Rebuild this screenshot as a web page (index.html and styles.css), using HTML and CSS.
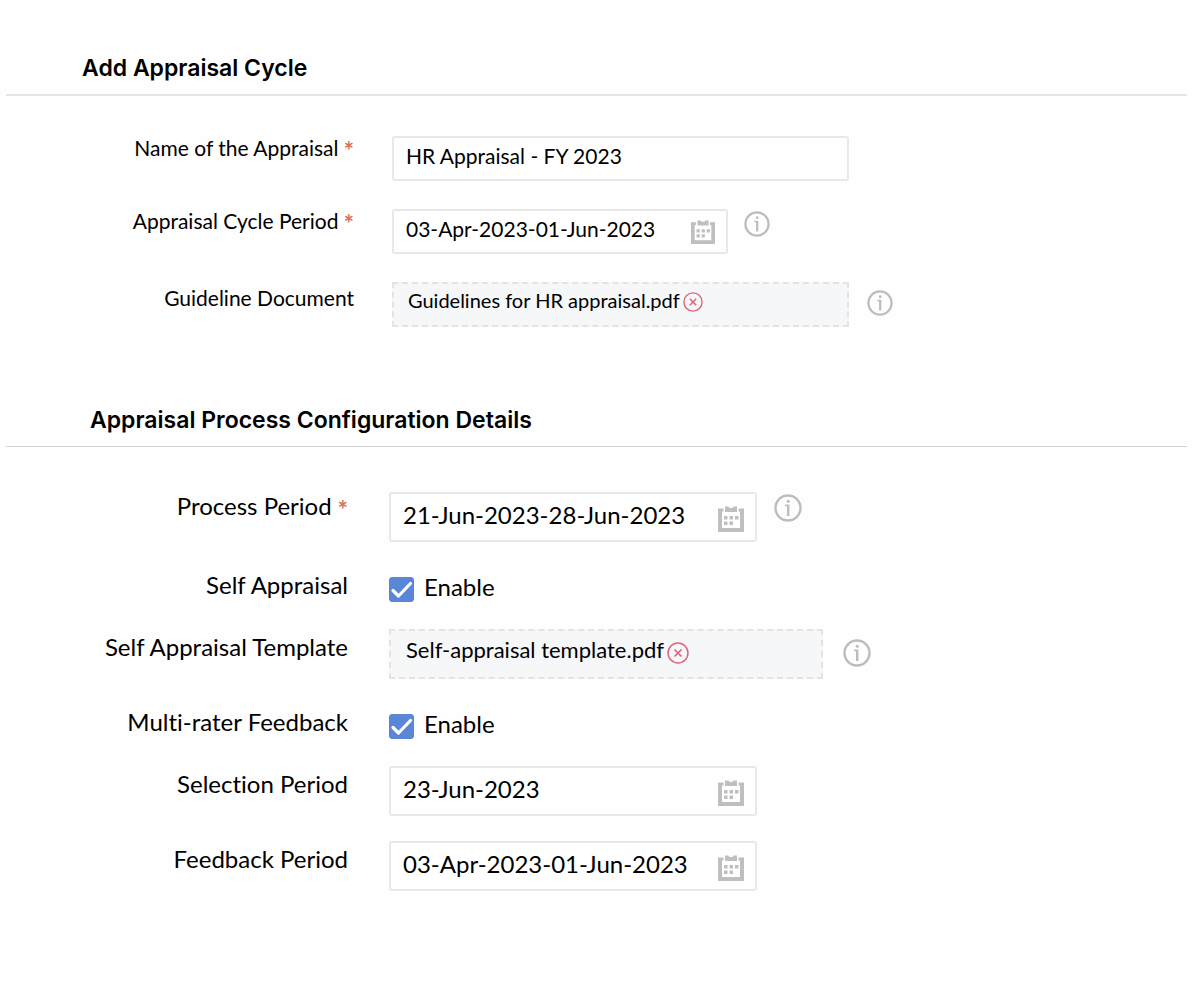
FILE: index.html
```html
<!DOCTYPE html>
<html lang="en">
<head>
  <meta charset="UTF-8">
  <meta name="viewport" content="width=device-width, initial-scale=1">
  <title>Add Appraisal Cycle</title>
  <link rel="stylesheet" href="styles.css">
</head>
<body>
  <!-- shared icons -->
  <svg class="icon-defs" width="0" height="0" aria-hidden="true">
    <symbol id="icon-calendar" viewBox="0 0 26 26">
      <path d="M0 2.500h5.500v3H4v16.500h18V5.500h-1.500v-3H26V26H0z"/>
      <path d="M7 .5h3.500l1 1.500h3l1-1.500H19V6H7z"/>
      <path d="M6 10h3.500v3.500H6zM11.500 10H15v3.500h-3.500zM17 10h3.500v3.500H17zM6 15.500h3.500V19H6zM11.500 15.500H15V19h-3.500z"/>
    </symbol>
    <symbol id="icon-info" viewBox="0 0 28 28">
      <circle cx="14" cy="14" r="12.500" fill="none" stroke="currentColor" stroke-width="2.400"/>
      <circle cx="14.200" cy="7.200" r="1.500"/>
      <path d="M11 10.500h4.400V22H13v-9.800h-2z"/>
    </symbol>
    <symbol id="icon-remove" viewBox="0 0 22 22">
      <circle cx="11" cy="11" r="10" fill="none" stroke="currentColor" stroke-width="1.500"/>
      <path d="M7.500 7.500l7 7M14.500 7.500l-7 7" fill="none" stroke="currentColor" stroke-width="1.700"/>
    </symbol>
    <symbol id="icon-check" viewBox="0 0 25 25">
      <path d="M4 13.500l5.500 5.500L21.500 6.500" fill="none" stroke="currentColor" stroke-width="3.200" stroke-linecap="round" stroke-linejoin="round"/>
    </symbol>
  </svg>

  <form class="appraisal-form">
    <section class="section cycle">
      <h2 class="section-title">Add Appraisal Cycle</h2>
      <div class="fields">
        <div class="row">
          <label class="label" for="name">Name of the Appraisal <span class="required">*</span></label>
          <div class="control wide">
            <input class="input" type="text" id="name" value="HR Appraisal - FY 2023" required>
          </div>
        </div>
        <div class="row">
          <label class="label" for="cyclePeriod">Appraisal Cycle Period <span class="required">*</span></label>
          <div class="control">
            <input class="input" type="text" id="cyclePeriod" value="03-Apr-2023-01-Jun-2023" required>
            <button class="calendar-btn" type="button" aria-label="Choose dates"><svg><use href="#icon-calendar"/></svg></button>
          </div>
          <button class="info-btn" type="button" aria-label="Help"><svg><use href="#icon-info"/></svg></button>
        </div>
        <div class="row file-row">
          <span class="label">Guideline Document</span>
          <div class="control wide file-box">
            <span class="file-name">Guidelines for HR appraisal.pdf</span>
            <button class="remove-btn" type="button" aria-label="Remove file"><svg><use href="#icon-remove"/></svg></button>
          </div>
          <button class="info-btn" type="button" aria-label="Help"><svg><use href="#icon-info"/></svg></button>
        </div>
      </div>
    </section>

    <section class="section process">
      <h2 class="section-title">Appraisal Process Configuration Details</h2>
      <div class="fields">
        <div class="row">
          <label class="label" for="processPeriod">Process Period <span class="required">*</span></label>
          <div class="control">
            <input class="input" type="text" id="processPeriod" value="21-Jun-2023-28-Jun-2023" required>
            <button class="calendar-btn" type="button" aria-label="Choose dates"><svg><use href="#icon-calendar"/></svg></button>
          </div>
          <button class="info-btn" type="button" aria-label="Help"><svg><use href="#icon-info"/></svg></button>
        </div>
        <div class="row low">
          <span class="label">Self Appraisal</span>
          <label class="check">
            <span class="check-box">
              <input type="checkbox" checked>
              <svg><use href="#icon-check"/></svg>
            </span>
            Enable
          </label>
        </div>
        <div class="row low file-row">
          <span class="label">Self Appraisal Template</span>
          <div class="control wide file-box">
            <span class="file-name">Self-appraisal template.pdf</span>
            <button class="remove-btn" type="button" aria-label="Remove file"><svg><use href="#icon-remove"/></svg></button>
          </div>
          <button class="info-btn" type="button" aria-label="Help"><svg><use href="#icon-info"/></svg></button>
        </div>
        <div class="row low">
          <span class="label">Multi-rater Feedback</span>
          <label class="check">
            <span class="check-box">
              <input type="checkbox" checked>
              <svg><use href="#icon-check"/></svg>
            </span>
            Enable
          </label>
        </div>
        <div class="row low">
          <label class="label" for="selectionPeriod">Selection Period</label>
          <div class="control">
            <input class="input" type="text" id="selectionPeriod" value="23-Jun-2023">
            <button class="calendar-btn" type="button" aria-label="Choose dates"><svg><use href="#icon-calendar"/></svg></button>
          </div>
        </div>
        <div class="row low">
          <label class="label" for="feedbackPeriod">Feedback Period</label>
          <div class="control">
            <input class="input" type="text" id="feedbackPeriod" value="03-Apr-2023-01-Jun-2023">
            <button class="calendar-btn" type="button" aria-label="Choose dates"><svg><use href="#icon-calendar"/></svg></button>
          </div>
        </div>
      </div>
    </section>
  </form>
</body>
</html>
```

FILE: styles.css
```css
* {
  box-sizing: border-box;
}

body {
  margin: 0;
  background: #fefefe;
  color: #000;
  font-family: Lato, sans-serif;
  font-variant-ligatures: none;
}

button {
  padding: 0;
  border: none;
  background: none;
  cursor: pointer;
}

svg {
  display: block;
  width: 100%;
  height: 100%;
  fill: currentColor;
}

.icon-defs {
  position: absolute;
  width: 0;
  height: 0;
}

.appraisal-form {
  padding: 53px 7px 40px 6px;
}

.section-title {
  margin: 0;
  padding: 0 76px 10px;
  border-bottom: 2px solid #e6e6e6;
  font-family: Inter, sans-serif;
  font-size: 23px;
  font-weight: 600;
  line-height: 31px;
}

.fields {
  display: flex;
  flex-direction: column;
}

.row {
  display: flex;
  align-items: flex-start;
}

.label {
  flex-shrink: 0;
  text-align: right;
  line-height: 28px;
}

.required {
  color: #dc6f5c;
  font-size: 24px;
  font-weight: 700;
  line-height: 0;
  vertical-align: -4px;
}

.control {
  position: relative;
  max-width: 100%;
}

.input {
  width: 100%;
  height: 100%;
  padding: 0 48px 6px 12px;
  border: 2px solid #e8e8e8;
  border-radius: 3px;
  background: #fff;
  color: inherit;
  font: inherit;
  outline: none;
}

.calendar-btn {
  position: absolute;
  right: 13px;
  bottom: 10px;
  color: #bfbfbf;
}

.info-btn {
  flex-shrink: 0;
  color: #bdbdbd;
}

.file-box {
  display: flex;
  align-items: flex-start;
  gap: 3px;
  padding: 6px 15px;
  border: 2px dashed #e2e3e4;
  background: #f5f7f9;
}

.file-name {
  line-height: 26px;
}

.remove-btn {
  margin-top: 5px;
  color: #df647a;
}

/* appraisal cycle */
.cycle {
  font-size: 21px;
}

.cycle .fields {
  gap: 28px;
  padding: 40px 0 78px;
}

.cycle .label {
  width: 348px;
  margin-right: 38px;
  line-height: 24px;
}

.cycle .control {
  width: 336px;
  height: 45px;
}

.cycle .control.wide {
  width: 457px;
}

.cycle .file-row .label {
  padding-top: 4px;
}

.cycle .file-name {
  font-size: 20px;
}

.cycle .file-box {
  padding: 3px 14px;
}

.cycle .calendar-btn {
  width: 24px;
  height: 24px;
}

.cycle .info-btn {
  width: 26px;
  height: 26px;
  margin: 2px 0 0 16px;
}

.cycle .remove-btn {
  width: 20px;
  height: 20px;
}

/* process configuration */
.process {
  font-size: 24px;
}

.process .section-title {
  padding-left: 84px;
  border-bottom-width: 1px;
  border-color: #d4d4d4;
}

.process .fields {
  gap: 25px;
  padding-top: 45px;
}

.process .label {
  width: 342px;
  margin-right: 41px;
}

.process .low .label {
  padding-top: 4px;
}

.process .control {
  width: 368px;
  height: 50px;
}

.process .control.wide {
  width: 434px;
}

.process .file-name {
  font-size: 22px;
}

.process .calendar-btn {
  width: 26px;
  height: 26px;
}

.process .info-btn {
  width: 28px;
  height: 28px;
  margin: 2px 0 0 17px;
}

.process .remove-btn {
  width: 22px;
  height: 22px;
}

.cycle .file-row .info-btn {
  margin: 8px 0 0 18px;
}

.process .file-row .info-btn {
  margin: 10px 0 0 20px;
}

.check {
  display: flex;
  align-items: flex-start;
  gap: 10px;
  height: 37px;
  padding-top: 10px;
  line-height: 20px;
  cursor: pointer;
}

.check-box {
  position: relative;
  width: 25px;
  height: 25px;
}

.check-box input {
  display: block;
  width: 25px;
  height: 25px;
  margin: 0;
  border-radius: 3px;
  background: #fff;
  border: 1px solid #5a86d8;
  appearance: none;
  cursor: pointer;
}

.check-box input:checked {
  background: #5a86d8;
}

.check-box svg {
  position: absolute;
  top: 0;
  left: 0;
  color: #fff;
  pointer-events: none;
}

@media (max-width: 900px) {
  .row {
    flex-wrap: wrap;
  }

  .cycle .label,
  .process .label {
    width: 100%;
    margin-right: 0;
    text-align: left;
  }
}
```
